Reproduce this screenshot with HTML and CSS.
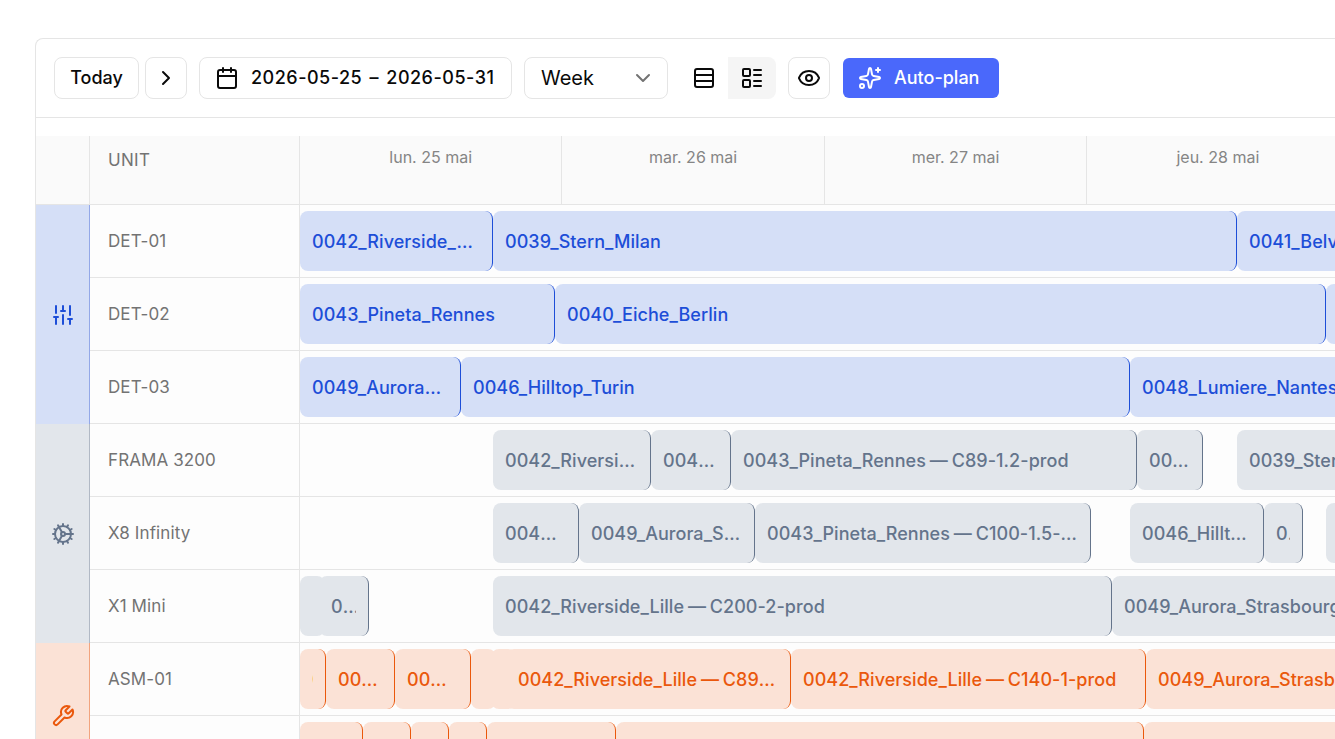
FILE: index.html
```html
<!DOCTYPE html>
<html lang="fr">
<head>
<meta charset="utf-8">
<title>Planning</title>
<link rel="stylesheet" href="styles.css">
</head>
<body>
<div class="panel">

  <div class="toolbar">
    <button class="btn today">Today</button>
    <button class="btn square next">
      <svg class="icon" viewBox="0 0 24 24"><path d="m9 18 6-6-6-6"/></svg>
    </button>
    <button class="btn range">
      <svg class="icon" viewBox="0 0 24 24"><path d="M8 2v4"/><path d="M16 2v4"/><rect x="3" y="4" width="18" height="18" rx="2"/><path d="M3 10h18"/></svg>
      <span>2026-05-25 – 2026-05-31</span>
    </button>
    <button class="btn week">
      <span>Week</span>
      <svg class="icon chevron" viewBox="0 0 24 24"><path d="m6 9 6 6 6-6"/></svg>
    </button>
    <div class="view-switch">
      <button class="switch-item">
        <svg class="icon" viewBox="0 0 24 24"><rect x="3" y="3" width="18" height="18" rx="2"/><path d="M21 9H3"/><path d="M21 15H3"/></svg>
      </button>
      <button class="switch-item active">
        <svg class="icon" viewBox="0 0 24 24"><rect x="3" y="3" width="7" height="7" rx="1"/><rect x="3" y="14" width="7" height="7" rx="1"/><path d="M14 4h7"/><path d="M14 9h7"/><path d="M14 15h7"/><path d="M14 20h7"/></svg>
      </button>
    </div>
    <button class="btn square eye">
      <svg class="icon" viewBox="0 0 24 24"><path d="M2.062 12.348a1 1 0 0 1 0-.696 10.75 10.75 0 0 1 19.876 0 1 1 0 0 1 0 .696 10.75 10.75 0 0 1-19.876 0"/><circle cx="12" cy="12" r="3"/></svg>
    </button>
    <button class="autoplan">
      <svg class="icon" viewBox="0 0 24 24"><path d="M11.017 2.814a1 1 0 0 1 1.966 0l1.051 5.558a2 2 0 0 0 1.594 1.594l5.558 1.051a1 1 0 0 1 0 1.966l-5.558 1.051a2 2 0 0 0-1.594 1.594l-1.051 5.558a1 1 0 0 1-1.966 0l-1.051-5.558a2 2 0 0 0-1.594-1.594l-5.558-1.051a1 1 0 0 1 0-1.966l5.558-1.051a2 2 0 0 0 1.594-1.594z"/><path d="M20 2v4"/><path d="M22 4h-4"/><circle cx="4" cy="20" r="2"/></svg>
      <span>Auto-plan</span>
    </button>
  </div>

  <div class="head">
    <div class="head-tag"></div>
    <div class="head-unit">UNIT</div>
    <div class="head-days">
      <div class="day">lun. 25 mai</div>
      <div class="day">mar. 26 mai</div>
      <div class="day">mer. 27 mai</div>
      <div class="day">jeu. 28 mai</div>
      <div class="day">ven. 29 mai</div>
    </div>
  </div>

  <!-- bar left/width are offsets in px from the start of the week -->
  <div class="group blue">
    <div class="tag">
      <svg class="icon" viewBox="0 0 24 24"><path d="M10 8h4"/><path d="M12 21v-9"/><path d="M12 8V3"/><path d="M17 16h4"/><path d="M19 12V3"/><path d="M19 21v-5"/><path d="M3 14h4"/><path d="M5 10V3"/><path d="M5 21v-7"/></svg>
    </div>
    <div class="rows">
      <div class="row">
        <div class="unit">DET-01</div>
        <div class="lane">
          <div class="bar" style="left:0;width:193px"><span>0042_Riverside_Lille</span></div>
          <div class="bar" style="left:193px;width:744px"><span>0039_Stern_Milan</span></div>
          <div class="bar" style="left:937px;width:400px"><span>0041_Belvedere_Lyon</span></div>
        </div>
      </div>
      <div class="row">
        <div class="unit">DET-02</div>
        <div class="lane">
          <div class="bar" style="left:0;width:255px"><span>0043_Pineta_Rennes</span></div>
          <div class="bar" style="left:255px;width:771px"><span>0040_Eiche_Berlin</span></div>
          <div class="bar" style="left:1026px;width:300px"></div>
        </div>
      </div>
      <div class="row">
        <div class="unit">DET-03</div>
        <div class="lane">
          <div class="bar" style="left:0;width:161px"><span>0049_Aurora_Strasbourg</span></div>
          <div class="bar" style="left:161px;width:669px"><span>0046_Hilltop_Turin</span></div>
          <div class="bar" style="left:830px;width:400px"><span>0048_Lumiere_Nantes</span></div>
        </div>
      </div>
    </div>
  </div>

  <div class="group gray">
    <div class="tag">
      <svg class="icon" viewBox="0 0 24 24"><path d="M12 20a8 8 0 1 0 0-16 8 8 0 0 0 0 16Z"/><path d="M12 14a2 2 0 1 0 0-4 2 2 0 0 0 0 4Z"/><path d="M12 2v2"/><path d="M12 22v-2"/><path d="m17 20.66-1-1.73"/><path d="M11 10.27 7 3.34"/><path d="m20.66 17-1.73-1"/><path d="m3.34 7 1.73 1"/><path d="M14 12h8"/><path d="M2 12h2"/><path d="m20.66 7-1.73 1"/><path d="m3.34 17 1.73-1"/><path d="m17 3.34-1 1.73"/><path d="m11 13.73-4 6.93"/></svg>
    </div>
    <div class="rows">
      <div class="row">
        <div class="unit">FRAMA 3200</div>
        <div class="lane">
          <div class="bar" style="left:193px;width:158px"><span>0042_Riverside_Lille — C89-1-prod</span></div>
          <div class="bar" style="left:351px;width:80px"><span>0049_Aurora_Strasbourg</span></div>
          <div class="bar" style="left:431px;width:406px"><span>0043_Pineta_Rennes — C89-1.2-prod</span></div>
          <div class="bar" style="left:837px;width:66px"><span>0046_Hilltop_Turin</span></div>
          <div class="bar" style="left:937px;width:400px"><span>0039_Stern_Milan — C89-1-prod</span></div>
        </div>
      </div>
      <div class="row">
        <div class="unit">X8 Infinity</div>
        <div class="lane">
          <div class="bar" style="left:193px;width:86px"><span>0042_Riverside_Lille</span></div>
          <div class="bar" style="left:279px;width:176px"><span>0049_Aurora_Strasbourg</span></div>
          <div class="bar" style="left:455px;width:336px"><span>0043_Pineta_Rennes — C100-1.5-prod</span></div>
          <div class="bar" style="left:830px;width:134px"><span>0046_Hilltop_Turin</span></div>
          <div class="bar" style="left:964px;width:39px"><span>0048_Lumiere_Nantes</span></div>
          <div class="bar" style="left:1026px;width:300px"></div>
        </div>
      </div>
      <div class="row">
        <div class="unit">X1 Mini</div>
        <div class="lane">
          <div class="bar flat" style="left:0;width:23px"></div>
          <div class="bar" style="left:19px;width:50px"><span>0039_Stern_Milan</span></div>
          <div class="bar" style="left:193px;width:619px"><span>0042_Riverside_Lille — C200-2-prod</span></div>
          <div class="bar" style="left:812px;width:400px"><span>0049_Aurora_Strasbourg — C200-2-prod</span></div>
        </div>
      </div>
    </div>
  </div>

  <div class="group orange">
    <div class="tag">
      <svg class="icon" viewBox="0 0 24 24"><path d="M14.7 6.3a1 1 0 0 0 0 1.4l1.6 1.6a1 1 0 0 0 1.4 0l3.77-3.77a6 6 0 0 1-7.94 7.94l-6.91 6.91a2.12 2.12 0 0 1-3-3l6.91-6.91a6 6 0 0 1 7.94-7.94l-3.76 3.76z"/></svg>
    </div>
    <div class="rows">
      <div class="row">
        <div class="unit">ASM-01</div>
        <div class="lane">
          <div class="bar" style="left:0;width:26px"><span>0039_Stern_Milan</span></div>
          <div class="bar" style="left:26px;width:69px"><span>0040_Eiche_Berlin</span></div>
          <div class="bar" style="left:95px;width:76px"><span>0061_Corso_Genova</span></div>
          <div class="bar flat" style="left:171px;width:20px"></div>
          <div class="bar flat" style="left:191px;width:19px"></div>
          <div class="bar" style="left:206px;width:285px"><span>0042_Riverside_Lille — C89-1-prod</span></div>
          <div class="bar" style="left:491px;width:355px"><span>0042_Riverside_Lille — C140-1-prod</span></div>
          <div class="bar" style="left:846px;width:400px"><span>0049_Aurora_Strasbourg — C140-1-prod</span></div>
        </div>
      </div>
      <div class="row">
        <div class="unit">ASM-02</div>
        <div class="lane">
          <div class="bar" style="left:0;width:63px"></div>
          <div class="bar" style="left:63px;width:48px"></div>
          <div class="bar" style="left:111px;width:38px"></div>
          <div class="bar" style="left:149px;width:38px"></div>
          <div class="bar" style="left:187px;width:129px"></div>
          <div class="bar" style="left:316px;width:528px"></div>
          <div class="bar" style="left:844px;width:400px"></div>
        </div>
      </div>
    </div>
  </div>

</div>
</body>
</html>
```

FILE: styles.css
```css
* {
    box-sizing: border-box;
}

html, body {
    height: 739px;
    margin: 0;
    overflow: hidden;
    background: #fff;
    font-family: "Inter", "Liberation Sans", sans-serif;
}

svg.icon {
    display: block;
    width: 24px;
    height: 24px;
    fill: none;
    stroke: currentColor;
    stroke-width: 2;
    stroke-linecap: round;
    stroke-linejoin: round;
    flex: none;
}

.panel {
    margin: 38px 0 0 35px;
    border-top: 1px solid #e5e5e5;
    border-left: 1px solid #e5e5e5;
    border-top-left-radius: 8px;
}

/* toolbar */

.toolbar {
    display: flex;
    align-items: center;
    height: 79px;
    padding: 0 18px 1px;
    border-bottom: 1px solid #e5e5e5;
}

button {
    font: inherit;
    color: #0a0a0a;
    background: none;
    border: 0;
    padding: 0;
}

.btn {
    display: flex;
    align-items: center;
    height: 42px;
    border: 1px solid #e5e5e5;
    border-radius: 8px;
    background: #fff;
    font-size: 18px;
    font-weight: 450;
}

.square {
    justify-content: center;
    width: 42px;
}

.today {
    justify-content: center;
    width: 85px;
    margin-right: 6px;
}

.next {
    margin-right: 12px;
}

.range {
    width: 313px;
    padding-left: 15px;
    gap: 12px;
    margin-right: 12px;
    letter-spacing: .5px;
    word-spacing: 2px;
}

.week {
    justify-content: space-between;
    width: 144px;
    padding: 0 12px 0 16px;
    margin-right: 15px;
    font-size: 20px;
    font-weight: 400;
}

.chevron {
    color: #737373;
}

.view-switch {
    display: flex;
    margin-right: 12px;
}

.switch-item {
    display: flex;
    align-items: center;
    justify-content: center;
    width: 42px;
    height: 42px;
}

.switch-item.active {
    width: 48px;
    margin-left: 3px;
    background: #f5f5f5;
    border-radius: 0 8px 8px 0;
}

.eye {
    margin-right: 13px;
}

.autoplan {
    display: flex;
    align-items: center;
    gap: 12px;
    width: 156px;
    height: 40px;
    padding-left: 15px;
    border-radius: 6px;
    background: #4a68fb;
    color: #fff;
    font-size: 18px;
    font-weight: 500;
}

/* header */

.head {
    display: flex;
    height: 69px;
    margin-top: 18px;
    background: #fafafa;
    border-bottom: 1px solid #e5e5e5;
    color: #737373;
}

.head-tag {
    width: 54px;
    border-right: 1px solid #e5e5e5;
}

.head-unit {
    width: 210px;
    padding: 14px 0 0 18px;
    border-right: 1px solid #e5e5e5;
    font-size: 17px;
    letter-spacing: .3px;
}

.head-days {
    display: flex;
    flex: 1;
    overflow: hidden;
}

.day {
    flex: none;
    width: 262.4px;
    padding-top: 11px;
    border-right: 1px solid #e5e5e5;
    text-align: center;
    font-size: 16px;
    color: #858585;
}

/* groups and rows */

.group {
    display: flex;
}

.tag {
    display: flex;
    align-items: center;
    justify-content: center;
    flex: none;
    width: 54px;
    border-right: 1px solid;
}

.rows {
    flex: 1;
    min-width: 0;
    background: #fdfdfd;
}

.row {
    display: flex;
    height: 73px;
    border-bottom: 1px solid #e5e5e5;
}

.unit {
    display: flex;
    align-items: center;
    flex: none;
    width: 210px;
    padding-left: 18px;
    border-right: 1px solid #e5e5e5;
    font-size: 17px;
    letter-spacing: .1px;
    color: #737373;
}

.lane {
    position: relative;
    flex: 1;
    overflow: hidden;
}

.bar {
    position: absolute;
    top: 6px;
    height: 60px;
    padding: 1px 12px 0;
    border-right: 1px solid;
    border-radius: 8px;
    line-height: 59px;
    font-size: 18px;
    font-weight: 450;
    letter-spacing: .05px;
    word-spacing: -1px;
    white-space: nowrap;
}

.bar span {
    display: block;
    overflow: hidden;
    text-overflow: ellipsis;
}

.bar.flat {
    border-right-color: transparent;
}

.blue .tag, .blue .bar {
    background: #d5dff7;
    color: #1d4ed8;
}

.blue .tag {
    border-right-color: #93a8e8;
}

.gray .tag, .gray .bar {
    background: #e2e6eb;
    color: #64748b;
}

.gray .tag {
    border-right-color: #b1b9c5;
}

.orange .tag, .orange .bar {
    background: #fbe2d6;
    color: #ea580c;
}

.orange .tag {
    border-right-color: #f2a47e;
}
```
